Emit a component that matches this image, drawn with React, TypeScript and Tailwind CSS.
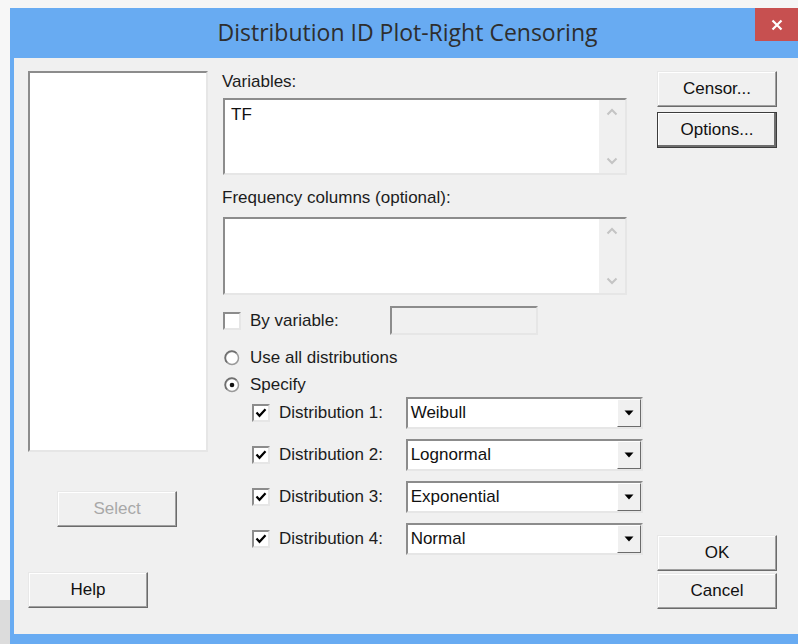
import React from "react";

const ui = "font-['Liberation_Sans',Arial,sans-serif]";

// Raised 3D push button, classic Windows look.
function PushButton({
  label,
  disabled,
  focused,
  className = "",
}: {
  label: string;
  disabled?: boolean;
  focused?: boolean;
  className?: string;
}) {
  return (
    <div
      className={`flex h-[36px] w-[120px] items-center justify-center bg-[#f0f0f0] text-[17px] ${
        focused
          ? "border border-[#3c3c3c] shadow-[inset_-2px_-2px_0_#6e6e6e,inset_1px_1px_0_#fff]"
          : "border border-t-[#e8e8e8] border-l-[#e8e8e8] border-b-[#6b6b6b] border-r-[#6b6b6b] shadow-[inset_-1px_-1px_0_#a0a0a0,inset_1px_1px_0_#fff]"
      } ${disabled ? "text-[#a8a8a8]" : "text-[#111]"} ${className}`}
    >
      {label}
    </div>
  );
}

// Sunken well used by list boxes, edits and combos.
const sunken =
  "border-2 border-t-[#8c8c8c] border-l-[#8c8c8c] border-b-[#e6e6e6] border-r-[#e6e6e6]";

function Chevron({ up }: { up?: boolean }) {
  return (
    <svg width="12" height="8" viewBox="0 0 12 8">
      <path
        d={up ? "M1.5 6.5 L6 2 L10.5 6.5" : "M1.5 1.5 L6 6 L10.5 1.5"}
        fill="none"
        stroke="#c4c4c4"
        strokeWidth="2"
      />
    </svg>
  );
}

function ColumnBox({ text, height }: { text?: string; height: string }) {
  return (
    <div className={`flex w-[404px] bg-white ${sunken} ${height}`}>
      <div className="flex-1 px-[6px] pt-[6px] text-[17px] leading-[18px] text-[#111]">{text}</div>
      <div className="flex w-[26px] flex-col items-center justify-between bg-[#f0f0f0] py-[8px]">
        <Chevron up />
        <Chevron />
      </div>
    </div>
  );
}

function CheckBox({ checked }: { checked?: boolean }) {
  return (
    <div className={`flex h-[18px] w-[18px] shrink-0 items-center justify-center bg-white ${sunken}`}>
      {checked && (
        <svg width="12" height="12" viewBox="0 0 12 12">
          <path d="M1.5 5.5 L4.5 8.8 L10.5 2.2" fill="none" stroke="#000" strokeWidth="2.2" />
        </svg>
      )}
    </div>
  );
}

function Radio({ checked }: { checked?: boolean }) {
  return (
    <svg width="16" height="16" viewBox="0 0 16 16" className="shrink-0">
      <circle cx="8" cy="8" r="6.5" fill="#fff" stroke="#9a9a9a" strokeWidth="1.5" />
      <path d="M3 12.5 A6.5 6.5 0 0 1 12.5 3" fill="none" stroke="#6e6e6e" strokeWidth="1.5" />
      {checked && <circle cx="8" cy="8" r="2.3" fill="#111" />}
    </svg>
  );
}

function Combo({ value }: { value: string }) {
  return (
    <div className={`flex h-[32px] w-[238px] items-stretch bg-white ${sunken}`}>
      <div className="flex flex-1 items-center pl-[3px] text-[17px] text-[#111]">{value}</div>
      <div className="flex w-[24px] items-center justify-center border border-t-[#fff] border-l-[#fff] border-b-[#6b6b6b] border-r-[#6b6b6b] bg-[#f0f0f0]">
        <svg width="10" height="6" viewBox="0 0 10 6">
          <path d="M0.5 0.5 H9.5 L5 5.5 Z" fill="#000" />
        </svg>
      </div>
    </div>
  );
}

const distributions = ["Weibull", "Lognormal", "Exponential", "Normal"];

export default function App() {
  return (
    <div className={`flex h-[644px] w-[798px] overflow-hidden bg-[#f5f5f5] ${ui}`}>
      <div className="flex w-[10px] shrink-0 flex-col">
        <div className="flex-1 bg-[#f7f7f7]" />
        <div className="h-[44px] bg-[#dcdcdc]" />
      </div>

      <div className="mt-[8px] flex w-[796px] shrink-0 flex-col bg-[#68abf2]">
        {/* title bar */}
        <div className="flex h-[50px] items-start">
          <div className="flex h-full flex-1 items-center justify-center pl-[50px] pb-[2px] font-['Open_Sans',sans-serif] text-[23px] text-[#2e2e2e]">
            Distribution ID Plot-Right Censoring
          </div>
          <div className="mr-[8px] flex h-[33px] w-[43px] items-center justify-center bg-[#c75050]">
            <svg width="12" height="12" viewBox="0 0 12 12">
              <path d="M1.5 1.5 L10.5 10.5 M10.5 1.5 L1.5 10.5" stroke="#fff" strokeWidth="2.2" />
            </svg>
          </div>
        </div>

        {/* client area */}
        <div className="mx-[4px] mb-[10px] flex flex-1 bg-[#f0f0f0] pl-[14px] pt-[13px] text-[#1c1c1c]">
          <div className="flex w-[180px] flex-col">
            <div className={`h-[381px] w-[180px] bg-white ${sunken}`} />
            <PushButton label="Select" disabled className="ml-[29px] mt-[39px]" />
            <PushButton label="Help" className="mt-[45px]" />
          </div>

          <div className="ml-[14px] flex w-[421px] flex-col text-[17px]">
            <div className="mt-[2px] h-[18px] leading-[18px]">Variables:</div>
            <div className="mt-[7px] ml-px">
              <ColumnBox text="TF" height="h-[77px]" />
            </div>
            <div className="mt-[14px] h-[18px] leading-[18px]">Frequency columns (optional):</div>
            <div className="mt-[10px] ml-px">
              <ColumnBox height="h-[78px]" />
            </div>

            <div className="mt-[11px] flex h-[29px] items-center">
              <div className="ml-px">
                <CheckBox />
              </div>
              <span className="ml-[9px] w-[140px]">By variable:</span>
              <div className={`h-[29px] w-[148px] bg-[#f0f0f0] ${sunken}`} />
            </div>

            <div className="mt-[14px] flex h-[18px] items-center gap-[10px] pl-[2px]">
              <Radio />
              <span>Use all distributions</span>
            </div>
            <div className="mt-[9px] flex h-[18px] items-center gap-[10px] pl-[2px]">
              <Radio checked />
              <span>Specify</span>
            </div>

            <div className="mt-[3px] flex flex-col gap-[10px]">
              {distributions.map((d, i) => (
                <div key={d} className="flex h-[32px] items-center">
                  <div className="ml-[30px]">
                    <CheckBox checked />
                  </div>
                  <span className="ml-[9px] w-[127px]">Distribution {i + 1}:</span>
                  <Combo value={d} />
                </div>
              ))}
            </div>
          </div>

          <div className="ml-[14px] flex flex-col">
            <PushButton label="Censor..." />
            <PushButton label="Options..." focused className="mt-[5px]" />
            <PushButton label="OK" className="mt-[387px]" />
            <PushButton label="Cancel" className="mt-[2px]" />
          </div>
        </div>
      </div>
    </div>
  );
}
